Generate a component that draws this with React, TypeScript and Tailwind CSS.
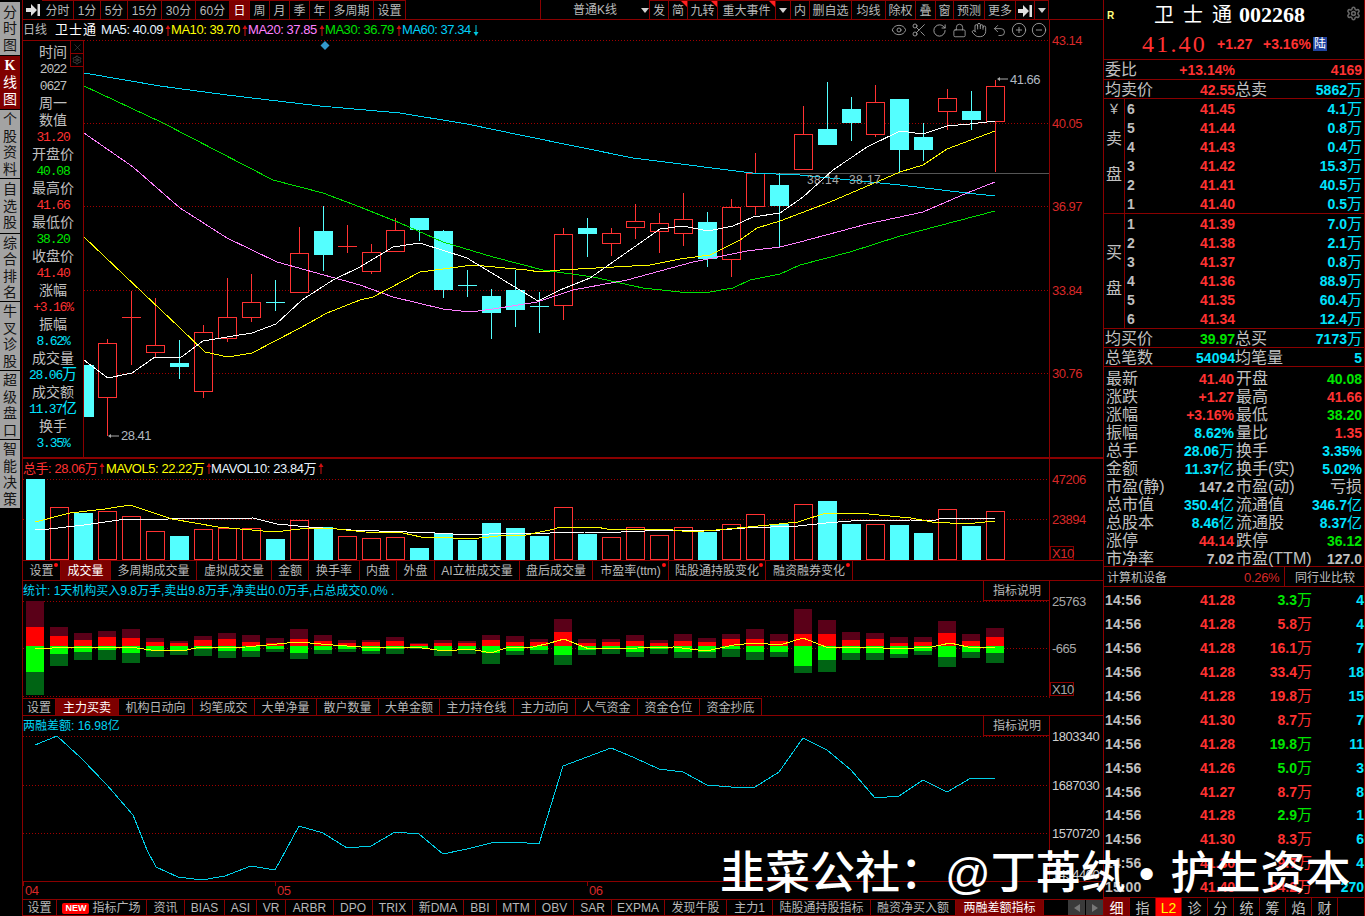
import React from "react";
import { Eye, Scissors, RotateCw, Lock, Hand, Undo2, CirclePlus, CircleMinus, Settings, X } from "lucide-react";

const SANS = "font-['Liberation_Sans','Noto_Sans_CJK_SC',sans-serif]";
const MONO = "font-['Liberation_Mono','Noto_Sans_CJK_SC',monospace] tracking-[-1.2px] text-[13px]";
const BOLD = "font-['Liberation_Sans',sans-serif] font-bold text-[14px]";
const C: Record<string, string> = {
  r: "text-[#ff3232]",
  c: "text-[#00e4ff]",
  g: "text-[#00e600]",
  w: "text-[#c0c0c0]",
};
const GRID = "#a00000";
const AX = "#8a0000";
const CY = "#54ffff";
const RD = "#ff3232";

type Tab = { w: string; t: React.ReactNode; a?: boolean; d?: boolean };

function TabRow({ tabs, cls }: { tabs: Tab[]; cls: string }) {
  return (
    <div className={`flex ${cls}`}>
      {tabs.map((x, i) => (
        <div
          key={i}
          className={`${x.w} relative flex items-center justify-center pt-[1px] border-r border-[#8a0000] text-[12px] whitespace-nowrap ${x.a ? "bg-[#7d0000] text-white" : "text-[#b8b8b8]"}`}
        >
          {x.t}
          {x.d && <span className="absolute right-[2px] top-[2px] w-[4px] h-[4px] rounded-full bg-[#ff1010]" />}
        </div>
      ))}
    </div>
  );
}

function RailTab({ t, h, active }: { t: string[]; h: string; active?: boolean }) {
  return (
    <div
      className={`${h} w-[20px] mb-px flex flex-col items-center justify-center text-[14px] leading-[16.5px] ${active ? "bg-[#800000] text-white" : "bg-[#a3a3a3] text-[#161616]"}`}
    >
      {t.map((c, i) => (
        <span key={i} className={c === "K" ? "font-['Liberation_Serif'] font-bold" : ""}>
          {c}
        </span>
      ))}
    </div>
  );
}

function JumpIcon() {
  return (
    <svg width="14" height="12" viewBox="0 0 14 12">
      <path d="M0 4h5V0l6 6-6 6V8H0z" fill="#e0e0e0" />
      <rect x="11.500" y="0" width="2.500" height="12" fill="#e0e0e0" />
    </svg>
  );
}

function Caret() {
  return <span className="w-0 h-0 border-l-[4px] border-r-[4px] border-t-[5px] border-l-transparent border-r-transparent border-t-[#d0d0d0]" />;
}

function Corner() {
  return <span className="absolute right-0 top-0 w-0 h-0 border-l-[6px] border-l-transparent border-t-[6px] border-t-[#ff2020]" />;
}

function Up({ down }: { down?: boolean }) {
  return (
    <svg width="6" height="11" viewBox="0 0 6 11" className={`inline-block ml-[2px] align-[-1px] ${down ? "rotate-180" : ""}`}>
      <path d="M3 0L0.500 4h2v7h1V4h2z" fill={down ? "#00c8e0" : "#d01010"} />
    </svg>
  );
}

function TB({ w, t, a, tri }: { w: string; t?: React.ReactNode; a?: boolean; tri?: boolean }) {
  return (
    <div
      className={`${w} h-[19px] relative flex items-center justify-center pt-[1px] border-r border-t border-[#8a0000] text-[12px] whitespace-nowrap ${a ? "bg-[#7d0000] text-white" : "text-[#b8b8b8]"}`}
    >
      {t}
      {tri && <Corner />}
    </div>
  );
}

function Toolbar() {
  return (
    <div className="h-[20px] flex border-b border-[#8a0000]">
      <div className="w-[19px] flex items-center justify-center"><JumpIcon /></div>
      <TB w="w-[32px]" t="分时" />
      <TB w="w-[27px]" t="1分" />
      <TB w="w-[27px]" t="5分" />
      <TB w="w-[34px]" t="15分" />
      <TB w="w-[34px]" t="30分" />
      <TB w="w-[34px]" t="60分" />
      <TB w="w-[20px]" t="日" a />
      <TB w="w-[20px]" t="周" />
      <TB w="w-[20px]" t="月" />
      <TB w="w-[20px]" t="季" />
      <TB w="w-[20px]" t="年" />
      <TB w="w-[44px]" t="多周期" />
      <TB w="w-[32px]" t="设置" />
      <div className="w-[135px] border-r border-[#8a0000]" />
      <div className="w-[109px] h-[19px] pt-[1px] flex items-center border-r border-[#8a0000] text-[12px] text-[#b8b8b8]">
        <span className="ml-[32px] w-[68px]">普通K线</span>
        <Caret />
      </div>
      <TB w="w-[19px]" t="发" />
      <TB w="w-[19px]" t="简" tri />
      <TB w="w-[30px]" t="九转" tri />
      <TB w="w-[58px]" t="重大事件" tri />
      <TB w="w-[15px]" t={<Caret />} />
      <TB w="w-[19px]" t="内" />
      <TB w="w-[42px]" t="删自选" />
      <TB w="w-[34px]" t="均线" />
      <TB w="w-[30px]" t="除权" />
      <TB w="w-[20px]" t="叠" />
      <TB w="w-[18px]" t="窗" />
      <TB w="w-[31px]" t="预测" />
      <TB w="w-[31px]" t="更多" />
      <TB w="w-[19px]" t={<JumpIcon />} />
      <TB w="w-[14px]" t={<Caret />} />
    </div>
  );
}

function MA({ w, label, val, cls, down }: { w: string; label: string; val: string; cls: string; down?: boolean }) {
  return (
    <div className={`${w} flex items-center whitespace-nowrap text-[13px] tracking-[-0.45px] ${cls}`}>
      <span>{label}: {val}</span>
      <Up down={down} />
    </div>
  );
}

function IconBtn({ children }: { children: React.ReactNode }) {
  return <div className="w-[20px] flex items-center justify-center text-[#a8a8a8]">{children}</div>;
}

function Legend() {
  return (
    <div className="h-[20px] flex items-center pr-[54px]">
      <span className="w-[32px] text-[12px] text-[#b8b8b8]">日线</span>
      <span className="w-[46px] text-[13px] tracking-[1px] text-white whitespace-nowrap">卫士通</span>
      <MA w="w-[70px]" label="MA5" val="40.09" cls="text-[#e8f4ff]" />
      <MA w="w-[77px]" label="MA10" val="39.70" cls="text-[#ffff00]" />
      <MA w="w-[77px]" label="MA20" val="37.85" cls="text-[#ff80ff]" />
      <MA w="w-[77px]" label="MA30" val="36.79" cls="text-[#00e000]" />
      <MA w="w-[77px]" label="MA60" val="37.34" cls="text-[#00d0f8]" down />
      <div className="flex-1" />
      <IconBtn><Eye size={16} strokeWidth={1.3} /></IconBtn>
      <IconBtn><Scissors size={16} strokeWidth={1.3} /></IconBtn>
      <IconBtn><RotateCw size={15} strokeWidth={1.5} /></IconBtn>
      <IconBtn><Lock size={15} strokeWidth={1.3} /></IconBtn>
      <IconBtn><Hand size={16} strokeWidth={1.3} /></IconBtn>
      <IconBtn><Undo2 size={15} strokeWidth={1.3} /></IconBtn>
      <IconBtn><CirclePlus size={16} strokeWidth={1.3} /></IconBtn>
      <IconBtn><CircleMinus size={16} strokeWidth={1.3} /></IconBtn>
    </div>
  );
}

const INFO: [string, string, boolean, string?][] = [
  ["时间", "w", false], ["2022", "w", true], ["0627", "w", true], ["周一", "w", false],
  ["数值", "w", false], ["31.20", "r", true], ["开盘价", "w", false], ["40.08", "g", true],
  ["最高价", "w", false], ["41.66", "r", true], ["最低价", "w", false], ["38.20", "g", true],
  ["收盘价", "w", false], ["41.40", "r", true], ["涨幅", "w", false], ["+3.16%", "r", true],
  ["振幅", "w", false], ["8.62%", "c", true], ["成交量", "w", false], ["28.06", "c", true, "万"],
  ["成交额", "w", false], ["11.37", "c", true, "亿"], ["换手", "w", false], ["3.35%", "c", true],
];

function InfoPanel() {
  return (
    <div className="w-[61px] relative border-t border-r border-[#8a0000] pt-[3px] flex flex-col items-center">
      {INFO.map(([t, c, m, u], i) => (
        <div key={i} className={`h-[17px] leading-[17px] whitespace-nowrap ${C[c]} ${m ? MONO : "text-[14px]"}`}>
          {t}
          {u && <span className="text-[15px] tracking-normal">{u}</span>}
        </div>
      ))}
      <div className="absolute right-0 top-0 w-[13px] h-[26px] flex flex-col border-l border-b border-[#8a0000] text-[#606060]">
        <div className="h-[13px] border-b border-[#8a0000] flex items-center justify-center"><X size={11} strokeWidth={1} /></div>
        <div className="h-[12px] flex items-center justify-center"><Settings size={10} strokeWidth={1.5} /></div>
      </div>
    </div>
  );
}

const K: [string, number, number, number, number][] = [
  ["c", 365, 417, 365, 417], ["r", 343, 397, 339, 436], ["r", 317, 317, 291, 365], ["r", 345, 352, 298, 357],
  ["c", 363, 367, 340, 379], ["r", 332, 391, 325, 398], ["r", 317, 338, 278, 342], ["r", 302, 317, 274, 322],
  ["c", 302, 302, 280, 311], ["r", 253, 292, 227, 292], ["c", 231, 255, 206, 271], ["r", 246, 246, 225, 253],
  ["r", 252, 271, 244, 274], ["r", 230, 251, 218, 251], ["c", 218, 230, 218, 241], ["c", 231, 290, 230, 298],
  ["c", 285, 285, 270, 297], ["c", 296, 313, 289, 339], ["c", 290, 310, 270, 327], ["c", 306, 306, 292, 333],
  ["r", 234, 305, 228, 320], ["c", 228, 234, 218, 257], ["r", 233, 243, 228, 256], ["r", 221, 227, 204, 239],
  ["r", 223, 231, 213, 253], ["r", 219, 233, 193, 246], ["c", 222, 259, 212, 267], ["r", 207, 259, 199, 277],
  ["r", 173, 206, 153, 215], ["c", 185, 206, 173, 247], ["r", 134, 169, 106, 169], ["c", 129, 145, 82, 145],
  ["c", 109, 123, 97, 141], ["r", 102, 134, 85, 137], ["c", 99, 150, 99, 172], ["c", 137, 150, 123, 161],
  ["r", 98, 111, 89, 130], ["c", 111, 120, 91, 130], ["r", 86, 121, 80, 172],
];

const MA60 = "84,73 160,86 227,95 320,106 400,113 467,124 520,135 633,158 752,173 800,175 900,185 967,193 995,196";
const MA30 = "84,86 163,123 273,180 323,193 360,207 400,223 443,242 493,257 543,270 593,277 643,288 680,292 710,292 733,288 750,280 780,274 800,265 850,252 900,236 995,211";
const MA20 = "84,133 133,167 180,208 227,238 277,262 360,285 393,297 443,309 470,312 493,309 537,302 573,290 627,280 693,262 747,251 780,247 800,242 867,224 923,212 967,193 995,182";
const MA10 = "84,237 143,293 180,328 205,352 228,357 252,353 300,328 327,313 360,300 373,297 420,272 473,265 527,270 540,272 560,270 650,265 680,259 710,255 740,240 757,228 780,221 830,202 900,172 923,165 947,149 995,131";
const MA5 = "84,360 108,378 132,373 155,357 180,358 203,341 227,337 252,333 276,324 302,300 333,280 360,267 393,247 420,243 467,258 538,301 560,290 590,278 660,229 683,226 708,231 733,226 753,217 780,213 803,197 833,170 867,147 900,131 923,134 947,126 970,124 995,121";

const AXT = `${SANS} text-[13px] tracking-[-0.5px]`;

function KChart() {
  return (
    <svg className={`flex-1 h-full block overflow-visible ${AXT}`} viewBox="84 40 1019 417">
      {[40, 123, 206, 290, 373].map((y) => (
        <line key={y} x1="84" x2="1049" y1={y + 0.5} y2={y + 0.5} stroke={GRID} strokeDasharray="1 2" />
      ))}
      <line x1="1049.5" x2="1049.5" y1="20" y2="457" stroke={AX} />
      <line x1="750" x2="1049" y1="173.5" y2="173.5" stroke="#555" />
      <rect x="751" y="172" width="2" height="2" fill="#e03030" />
      <path d="M325 41l4.500 4.500-4.500 4.500-4.500-4.500z" fill="#3399cc" />
      {K.map(([k, t, b, wt, wb], n) => {
        const x = 35 + 24 * (n + 2);
        const col = k === "r" ? RD : CY;
        const flat = t === b;
        return (
          <g key={n} shapeRendering="crispEdges">
            {(x > 84) && <line x1={x + 0.5} x2={x + 0.5} y1={wt} y2={wb} stroke={col} />}
            {flat ? (
              <line x1={x - 9} x2={x + 10} y1={t + 0.5} y2={t + 0.5} stroke={col} />
            ) : k === "r" ? (
              <rect x={x - 8.5} y={t + 0.5} width={18} height={b - t} fill="#000" stroke={col} />
            ) : (
              <rect x={Math.max(x - 9, 84)} y={t} width={x > 84 ? 19 : 10} height={b - t} fill={col} />
            )}
          </g>
        );
      })}
      <g fill="none" shapeRendering="crispEdges">
        <polyline points={MA60} stroke="#00d4f4" />
        <polyline points={MA30} stroke="#00e000" />
        <polyline points={MA20} stroke="#ff80ff" />
        <polyline points={MA10} stroke="#ffff00" />
        <polyline points={MA5} stroke="#ffffff" />
      </g>
      <text x="807" y="184" fill="#a8a8a8" className="text-[12px]" letterSpacing="0.4">38.14</text>
      <text x="849" y="184" fill="#a8a8a8" className="text-[12px]" letterSpacing="0.4">38.17</text>
      <path d="M997 79l3-2v1.500h8v1h-8v1.500z" fill="#a8a8a8" />
      <text x="1010" y="84" fill="#b0b8c0">41.66</text>
      <path d="M108 436l3-2v1.500h8v1h-8v1.500z" fill="#a8a8a8" />
      <text x="121" y="440" fill="#b0b8c0">28.41</text>
      {[[43.14, 45], [40.05, 128], [36.97, 211], [33.84, 295], [30.76, 378]].map(([v, y]) => (
        <text key={y} x="1052" y={y} fill="#d82828">{(v as number).toFixed(2)}</text>
      ))}
    </svg>
  );
}

const VOL: [string, number][] = [
  ["c", 479], ["r", 507], ["c", 513], ["r", 511], ["r", 516], ["r", 531], ["c", 536], ["r", 529], ["r", 528], ["r", 528],
  ["c", 539], ["r", 520], ["c", 527], ["r", 536], ["r", 538], ["r", 537], ["c", 548], ["c", 533], ["c", 540], ["c", 523],
  ["c", 528], ["c", 536], ["r", 507], ["c", 534], ["r", 537], ["r", 527], ["r", 535], ["r", 527], ["c", 532], ["r", 524],
  ["r", 514], ["c", 524], ["r", 504], ["c", 501], ["c", 524], ["r", 524], ["c", 525], ["c", 533], ["r", 509], ["c", 526], ["r", 511],
];
const MV5 = "35,522 70,513 105,509 130,505 154,513 172,519 218,527 274,532 309,528 337,529 365,532 403,533 421,537 453,538 470,539 498,536 526,535 550,530 561,527 596,527 607,529 663,529 692,532 716,530 769,525 798,522 826,513 858,513 879,515 911,518 932,522 950,523 975,523 995,521";
const MV10 = "35,530 49,529 84,525 126,519 168,519 253,518 277,524 309,527 351,530 407,532 435,533 470,535 509,533 550,533 585,532 621,532 670,530 720,530 745,528 798,526 826,523 851,521 911,520 932,521 943,518 995,518";

function VolChart() {
  return (
    <div className="h-[101px] relative">
      <svg className={`w-full h-full block ${AXT}`} viewBox="23 459 1080 101">
        {[479, 519].map((y) => (
          <line key={y} x1="23" x2="1049" y1={y + 0.5} y2={y + 0.5} stroke={GRID} strokeDasharray="1 2" />
        ))}
        <line x1="1049.5" x2="1049.5" y1="459" y2="560" stroke={AX} />
        <g shapeRendering="crispEdges">
          {VOL.map(([k, t], i) => {
            const x = 26 + 24 * i;
            return k === "c" ? (
              <rect key={i} x={x} y={t} width={19} height={560 - t} fill={CY} />
            ) : (
              <rect key={i} x={x + 0.5} y={t + 0.5} width={18} height={559 - t} fill="#000" stroke={RD} />
            );
          })}
        </g>
        <g fill="none" shapeRendering="crispEdges">
          <polyline points={MV10} stroke="#ffffff" />
          <polyline points={MV5} stroke="#ffff00" />
        </g>
        <text x="1052" y="484" fill="#d82828">47206</text>
        <text x="1052" y="524" fill="#d82828">23894</text>
        <rect x="1050.5" y="546.5" width="23" height="13" fill="none" stroke={AX} />
        <text x="1052" y="558" fill="#d82828">X10</text>
      </svg>
      <div className="absolute left-0 top-[1px] flex items-center h-[18px] text-[13px] tracking-[-0.45px] whitespace-nowrap">
        <span className="w-[83px] text-[#ff3232]">总手: 28.06万<Up /></span>
        <span className="w-[105px] text-[#ffff00]">MAVOL5: 22.22万<Up /></span>
        <span className="text-[#e8f4ff]">MAVOL10: 23.84万<Up /></span>
      </div>
    </div>
  );
}

const FLOW: number[][] = [
  [453, 531, 666, 735], [531, 558, 612, 648], [549, 570, 606, 630], [543, 561, 600, 630], [537, 564, 609, 639],
  [564, 576, 603, 621], [573, 579, 600, 615], [558, 570, 597, 618], [549, 567, 603, 624], [555, 576, 603, 621],
  [564, 579, 597, 606], [537, 567, 609, 627], [555, 573, 600, 612], [570, 579, 597, 606], [570, 576, 603, 612],
  [561, 573, 597, 612], [579, 582, 594, 597], [570, 579, 600, 618], [573, 579, 597, 612], [555, 570, 609, 642],
  [558, 576, 603, 615], [567, 576, 600, 612], [507, 546, 615, 645], [567, 579, 600, 615], [567, 576, 597, 612],
  [555, 573, 606, 621], [570, 579, 597, 612], [552, 573, 606, 624], [564, 576, 606, 624], [552, 567, 597, 621],
  [537, 567, 606, 630], [552, 573, 606, 621], [477, 552, 648, 669], [510, 552, 630, 666], [546, 570, 609, 630],
  [549, 567, 609, 630], [561, 579, 612, 624], [561, 576, 603, 615], [513, 549, 621, 651], [552, 573, 606, 624], [534, 561, 609, 639],
];
const FL = "35,649 70,647 130,647 151,650 182,651 196,648 246,647 298,642 333,645 361,647 414,647 445,651 470,649 491,653 509,647 533,647 550,643 564,639 589,649 638,648 674,647 706,651 734,645 755,643 780,645 803,638 826,647 869,647 897,649 932,647 950,643 968,647 995,647";

function FlowChart() {
  const y = (v: number) => Math.round(v / 3 + 450);
  return (
    <div className="h-[117px] relative">
      <svg className={`w-full h-full block ${AXT}`} viewBox="23 581 1080 117">
        {[601, 648, 696].map((v) => (
          <line key={v} x1="23" x2="1049" y1={v + 0.5} y2={v + 0.5} stroke={GRID} strokeDasharray="1 2" />
        ))}
        <line x1="1049.5" x2="1049.5" y1="581" y2="698" stroke={AX} />
        <g shapeRendering="crispEdges">
          {FLOW.map(([a, b, c, d], i) => {
            const x = 26 + 24 * i;
            return (
              <g key={i}>
                <rect x={x} y={y(a)} width="18" height={y(b) - y(a)} fill="#5a0018" />
                <rect x={x} y={y(b)} width="18" height={646 - y(b)} fill="#ff0000" />
                <rect x={x} y={646} width="18" height={y(c) - 646} fill="#00ff00" />
                <rect x={x} y={y(c)} width="18" height={y(d) - y(c)} fill="#006414" />
              </g>
            );
          })}
        </g>
        <polyline points={FL} fill="none" stroke="#ffff00" shapeRendering="crispEdges" />
        <text x="1052" y="606" fill="#a8a8a8">25763</text>
        <text x="1052" y="653" fill="#a8a8a8">-665</text>
        <rect x="1050.5" y="682.5" width="23" height="13" fill="none" stroke={AX} />
        <text x="1052" y="694" fill="#a8a8a8">X10</text>
      </svg>
      <div className="absolute left-0 top-[1px] h-[18px] flex items-center text-[12px] text-[#00d4f4] whitespace-nowrap">
        统计: 1天机构买入9.8万手,卖出9.8万手,净卖出0.0万手,占总成交0.0% .
      </div>
      <Explain />
    </div>
  );
}

function Explain() {
  return (
    <div className="absolute left-[960px] top-0 w-[67px] h-[20px] flex items-center justify-center border-l border-b border-[#8a0000] text-[12px] text-[#b8b8b8]">
      指标说明
    </div>
  );
}

const MG = "35,745 57,736 81,758 107,785 133,815 147,850 156,867 178,877 202,880 225,876 251,866 275,870 286,850 299,826 323,833 347,848 371,846 395,832 419,834 443,854 467,849 491,843 515,842 539,844 563,766 587,757 611,748 635,758 659,769 683,772 707,785 731,787 755,787 779,772 803,738 827,750 851,770 875,798 899,796 923,780 947,792 971,778 995,778";

function MarginChart() {
  return (
    <div className="h-[183px] relative">
      <svg className={`w-full h-full block ${AXT}`} viewBox="23 716 1080 183">
        {[736, 785, 833].map((v) => (
          <line key={v} x1="23" x2="1049" y1={v + 0.5} y2={v + 0.5} stroke={GRID} strokeDasharray="1 2" />
        ))}
        <line x1="1049.5" x2="1049.5" y1="716" y2="882" stroke={AX} />
        <line x1="23" x2="1103" y1="881.5" y2="881.5" stroke={AX} />
        <polyline points={MG} fill="none" stroke="#00d0e8" shapeRendering="crispEdges" />
        <text x="1052" y="741" fill="#d0d0d0">1803340</text>
        <text x="1052" y="790" fill="#d0d0d0">1687030</text>
        <text x="1052" y="838" fill="#d0d0d0">1570720</text>
        <text x="1052" y="879" fill="#d0d0d0">1454400</text>
        {[[23, "04", 25], [275, "05", 277], [587, "06", 589]].map(([x, t, tx]) => (
          <g key={t as string}>
            <line x1={(x as number) + 0.5} x2={(x as number) + 0.5} y1="882" y2="886" stroke={AX} />
            <text x={tx as number} y="895" fill="#d82828">{t as string}</text>
          </g>
        ))}
      </svg>
      <div className="absolute left-0 top-[1px] h-[18px] flex items-center text-[12px] text-[#00d4f4] whitespace-nowrap">
        两融差额: 16.98亿
      </div>
      <Explain />
    </div>
  );
}

const T1: Tab[] = [
  { w: "w-[38px]", t: "设置", d: true }, { w: "w-[50px]", t: "成交量", a: true }, { w: "w-[86px]", t: "多周期成交量" },
  { w: "w-[75px]", t: "虚拟成交量" }, { w: "w-[37px]", t: "金额" }, { w: "w-[51px]", t: "换手率" }, { w: "w-[37px]", t: "内盘" },
  { w: "w-[38px]", t: "外盘" }, { w: "w-[85px]", t: "AI立桩成交量" }, { w: "w-[73px]", t: "盘后成交量" },
  { w: "w-[76px]", t: "市盈率(ttm)", d: true }, { w: "w-[97px]", t: "陆股通持股变化", d: true }, { w: "w-[87px]", t: "融资融券变化", d: true },
];
const T2: Tab[] = [
  { w: "w-[33px]", t: "设置" }, { w: "w-[63px]", t: "主力买卖", a: true }, { w: "w-[74px]", t: "机构日动向" }, { w: "w-[62px]", t: "均笔成交" },
  { w: "w-[62px]", t: "大单净量" }, { w: "w-[62px]", t: "散户数量" }, { w: "w-[61px]", t: "大单金额" }, { w: "w-[74px]", t: "主力持仓线" },
  { w: "w-[62px]", t: "主力动向" }, { w: "w-[62px]", t: "人气资金" }, { w: "w-[62px]", t: "资金仓位" }, { w: "w-[62px]", t: "资金抄底" },
];
const T3: Tab[] = [
  { w: "w-[34px]", t: "设置" },
  { w: "w-[90px]", t: <><span className="mr-[3px] rounded-[2px] bg-[#ff0000] text-white text-[9px] font-bold leading-[11px] px-[3px]">NEW</span>指标广场</> },
  { w: "w-[38px]", t: "资讯" }, { w: "w-[40px]", t: "BIAS" }, { w: "w-[32px]", t: "ASI" }, { w: "w-[29px]", t: "VR" }, { w: "w-[48px]", t: "ARBR" },
  { w: "w-[39px]", t: "DPO" }, { w: "w-[40px]", t: "TRIX" }, { w: "w-[51px]", t: "新DMA" }, { w: "w-[33px]", t: "BBI" }, { w: "w-[39px]", t: "MTM" },
  { w: "w-[38px]", t: "OBV" }, { w: "w-[38px]", t: "SAR" }, { w: "w-[53px]", t: "EXPMA" }, { w: "w-[62px]", t: "发现牛股" }, { w: "w-[46px]", t: "主力1" },
  { w: "w-[98px]", t: "陆股通持股指标" }, { w: "w-[85px]", t: "融资净买入额" }, { w: "w-[88px]", t: "两融差额指标", a: true },
];

function Num({ v, c, u }: { v: string; c: string; u?: string }) {
  return (
    <span className={`${BOLD} ${C[c]} inline-flex items-center leading-none whitespace-nowrap`}>
      {v}
      {u && <span className={`${SANS} font-normal text-[15px] leading-none -mt-[1px]`}>{u}</span>}
    </span>
  );
}

function Depth({ n, p, v }: { n: string; p: string; v: string }) {
  return (
    <div className="h-[19px] grid grid-cols-[110px_127px] items-center">
      <div className="flex justify-between items-center">
        <span className={`${BOLD} ${C.w} leading-none ml-[2px]`}>{n}</span>
        <Num v={p} c="r" />
      </div>
      <div className="flex justify-end items-center"><Num v={v} c="c" u="万" /></div>
    </div>
  );
}

function SideRow({ a, av, ac, b, bv, bc, u }: { a: string; av: string; ac: string; b: string; bv: string; bc: string; u?: string }) {
  return (
    <div className={`h-[19px] pt-[1px] grid grid-cols-[131px_128px] items-center text-[16px] leading-[18px] ${C.w} border-b border-[#8a0000]`}>
      <div className="flex justify-between items-center pl-px"><span>{a}</span><Num v={av} c={ac} /></div>
      <div className="flex justify-between items-center pr-px"><span>{b}</span><Num v={bv} c={bc} u={u} /></div>
    </div>
  );
}

const STATS: [string, string, string, string?, string?, string?, string?, string?][] = [
  ["最新", "41.40", "r", undefined, "开盘", "40.08", "g"],
  ["涨跌", "+1.27", "r", undefined, "最高", "41.66", "r"],
  ["涨幅", "+3.16%", "r", undefined, "最低", "38.20", "g"],
  ["振幅", "8.62%", "c", undefined, "量比", "1.35", "r"],
  ["总手", "28.06", "c", "万", "换手", "3.35%", "c"],
  ["金额", "11.37", "c", "亿", "换手(实)", "5.02%", "c"],
  ["市盈(静)", "147.2", "w", undefined, "市盈(动)", "亏损", "w"],
  ["总市值", "350.4", "c", "亿", "流通值", "346.7", "c", "亿"],
  ["总股本", "8.46", "c", "亿", "流通股", "8.37", "c", "亿"],
  ["涨停", "44.14", "r", undefined, "跌停", "36.12", "g"],
  ["市净率", "7.02", "w", undefined, "市盈(TTM)", "127.0", "w"],
];

const TICKS: [string, string, string, string, string][] = [
  ["14:56", "41.28", "3.3", "g", "4"], ["14:56", "41.28", "5.8", "r", "4"], ["14:56", "41.28", "16.1", "r", "7"],
  ["14:56", "41.28", "33.4", "r", "18"], ["14:56", "41.28", "19.8", "r", "15"], ["14:56", "41.30", "8.7", "r", "7"],
  ["14:56", "41.28", "19.8", "g", "11"], ["14:56", "41.26", "5.0", "g", "3"], ["14:56", "41.27", "8.7", "r", "8"],
  ["14:56", "41.28", "2.9", "g", "1"], ["14:56", "41.30", "8.3", "r", "6"], ["14:56", "41.30", "9.7", "r", "4"],
  ["15:00", "41.40", "94.2", "r", "270"],
];

function RightPanel() {
  return (
    <div className={`w-[262px] flex flex-col border-l border-r border-[#8a0000]`}>
      <div className="h-[60px] border-b border-[#8a0000] flex flex-col">
        <div className="h-[29px] flex items-center relative">
          <span className="absolute left-[3px] top-[8px] text-[10px] font-bold text-[#ffff80] font-['Liberation_Sans']">R</span>
          <span className="ml-[50px] font-['Liberation_Serif','Noto_Sans_CJK_SC',serif] text-[20px] text-white tracking-[9px] whitespace-nowrap">卫士通</span>
          <span className="-ml-[2px] font-['Liberation_Serif',serif] font-bold text-[22px] text-white">002268</span>
          <Settings size={15} strokeWidth={2.5} className="absolute right-[3px] top-[6px] text-[#666]" />
        </div>
        <div className="h-[30px] flex items-center">
          <span className="ml-[38px] w-[75px] font-['Liberation_Serif',serif] text-[24px] tracking-[2.2px] text-[#ff3232]">41.40</span>
          <span className={`${BOLD} ${C.r} w-[46px]`}>+1.27</span>
          <span className={`${BOLD} ${C.r} w-[50px]`}>+3.16%</span>
          <span className="w-[14px] h-[14px] bg-[#2244a0] text-white text-[12px] leading-[14px] text-center">陆</span>
        </div>
      </div>
      <div className={`h-[20px] pt-[1px] grid grid-cols-[131px_128px] items-center text-[16px] leading-[18px] ${C.w} border-b border-[#8a0000]`}>
        <div className="flex justify-between items-center pl-px"><span>委比</span><Num v="+13.14%" c="r" /></div>
        <div className="flex justify-end items-center pr-px"><Num v="4169" c="r" /></div>
      </div>
      <SideRow a="均卖价" av="42.55" ac="r" b="总卖" bv="5862" bc="c" u="万" />
      <div className="flex border-b border-[#8a0000]">
        <div className={`w-[21px] flex flex-col items-center text-[16px] leading-[16px] ${C.w} border-r border-[#8a0000]`}>
          <div className="h-[19px] leading-[19px] text-[13px]">￥</div>
          <span className="mt-[13px]">卖</span>
          <span className="mt-[20px]">盘</span>
        </div>
        <div className="flex-1">
          <Depth n="6" p="41.45" v="4.1" />
          <Depth n="5" p="41.44" v="0.8" />
          <Depth n="4" p="41.43" v="0.4" />
          <Depth n="3" p="41.42" v="15.3" />
          <Depth n="2" p="41.41" v="40.5" />
          <Depth n="1" p="41.40" v="0.5" />
        </div>
      </div>
      <div className="flex border-b border-[#8a0000]">
        <div className={`w-[21px] flex flex-col items-center text-[16px] leading-[16px] ${C.w} border-r border-[#8a0000]`}>
          <span className="mt-[31px]">买</span>
          <span className="mt-[20px]">盘</span>
        </div>
        <div className="flex-1">
          <Depth n="1" p="41.39" v="7.0" />
          <Depth n="2" p="41.38" v="2.1" />
          <Depth n="3" p="41.37" v="0.8" />
          <Depth n="4" p="41.36" v="88.9" />
          <Depth n="5" p="41.35" v="60.4" />
          <Depth n="6" p="41.34" v="12.4" />
        </div>
      </div>
      <SideRow a="均买价" av="39.97" ac="g" b="总买" bv="7173" bc="c" u="万" />
      <SideRow a="总笔数" av="54094" ac="c" b="均笔量" bv="5" bc="c" />
      <div className="h-[200px] pt-[3px] border-b border-[#8a0000]">
        {STATS.map(([a, v, c, u, b, v2, c2, u2], i) => (
          <div key={i} className={`h-[18px] grid grid-cols-[131px_128px] items-center text-[16px] leading-[18px] ${C.w} whitespace-nowrap`}>
            <div className="flex justify-between items-center pl-[2px] pr-[1px]"><span>{a}</span><Num v={v} c={c} u={u} /></div>
            <div className="flex justify-between items-center pl-[1px] pr-px">
              <span>{b}</span>
              {v2 === "亏损" ? <span>亏损</span> : <Num v={v2 as string} c={c2 as string} u={u2} />}
            </div>
          </div>
        ))}
      </div>
      <div className={`h-[20px] flex items-center border-b border-[#8a0000] text-[12px] ${C.w}`}>
        <span className="ml-[3px] w-[137px] pt-[2px]">计算机设备</span>
        <span className="w-[40px] pt-[2px] text-[#d82828] text-[13px] tracking-[-0.3px]">0.26%</span>
        <span className="h-full pt-[2px] flex items-center border-l border-[#8a0000] pl-[10px]">同行业比较</span>
      </div>
      <div className="h-[310px] pt-[1px]">
        {TICKS.map(([t, p, v, c, n], i) => (
          <div key={i} className="h-[23.9px] pt-[1px] flex items-center">
            <span className={`${BOLD} ${C.w} leading-none ml-[1px] w-[95px] tracking-[0.1px]`}>{t}</span>
            <Num v={p} c="r" />
            <span className="w-[77px] flex justify-end items-center"><Num v={v} c={c} u="万" /></span>
            <span className="flex-1 flex justify-end items-center"><Num v={n} c="c" /></span>
          </div>
        ))}
      </div>
      <div className={`flex-1 flex border-t border-[#8a0000] text-[14px] ${C.w}`}>
        {["细", "指", "L2", "诊", "分", "统", "筹", "焰", "财"].map((t) => (
          <div
            key={t}
            className={`w-[26px] flex items-center justify-center border-r border-[#8a0000] ${t === "细" ? "bg-[#7d0000] text-white" : t === "L2" ? "bg-[#ff0000] text-[#ffff00]" : ""}`}
          >
            {t}
          </div>
        ))}
      </div>
    </div>
  );
}

function Rail() {
  return (
    <div className="w-[22px] pt-[2px] flex flex-col">
      <RailTab t={["分", "时", "图"]} h="h-[53px]" />
      <RailTab t={["K", "线", "图"]} h="h-[53px]" active />
      <RailTab t={["个", "股", "资", "料"]} h="h-[68px]" />
      <RailTab t={["自", "选", "股"]} h="h-[54px]" />
      <RailTab t={["综", "合", "排", "名"]} h="h-[67px]" />
      <RailTab t={["牛", "叉", "诊", "股"]} h="h-[68px]" />
      <RailTab t={["超", "级", "盘", "口"]} h="h-[68px]" />
      <RailTab t={["智", "能", "决", "策"]} h="h-[68px]" />
    </div>
  );
}

function BottomBar() {
  return (
    <div className="h-[17px] flex border-y border-[#8a0000]">
      <TabRow tabs={T3} cls="h-full border-l border-[#8a0000] -ml-px" />
      <div className="ml-[24px] flex gap-[1px] items-center">
        <div className="w-[17px] h-[15px] bg-[#3a3a3a] flex items-center justify-center">
          <span className="w-0 h-0 border-y-[4px] border-r-[6px] border-y-transparent border-r-[#777]" />
        </div>
        <div className="w-[17px] h-[15px] bg-[#3a3a3a] flex items-center justify-center">
          <span className="w-0 h-0 border-y-[4px] border-l-[6px] border-y-transparent border-l-[#777]" />
        </div>
      </div>
    </div>
  );
}

export default function App() {
  return (
    <div className={`w-[1365px] h-[916px] bg-black flex overflow-hidden relative ${SANS}`}>
      <Rail />
      <div className="w-[1081px] flex flex-col border-l border-[#8a0000]">
        <Toolbar />
        <div className="h-[439px] flex flex-col border-b-2 border-[#8a0000]">
          <Legend />
          <div className="h-[417px] flex">
            <InfoPanel />
            <KChart />
          </div>
        </div>
        <VolChart />
        <TabRow tabs={T1} cls="h-[21px] border-y border-[#8a0000]" />
        <FlowChart />
        <TabRow tabs={T2} cls="h-[18px] border-b border-[#8a0000] [&>*]:border-t [&>*]:border-t-[#8a0000]" />
        <MarginChart />
        <BottomBar />
      </div>
      <RightPanel />
      <div className="absolute left-[720px] top-[846px] text-[45px] leading-[56px] font-medium text-white whitespace-nowrap">
        韭菜公社：@丁苒纨<span className="ml-[13px] mr-[16px]">•</span>护生资本
      </div>
    </div>
  );
}
